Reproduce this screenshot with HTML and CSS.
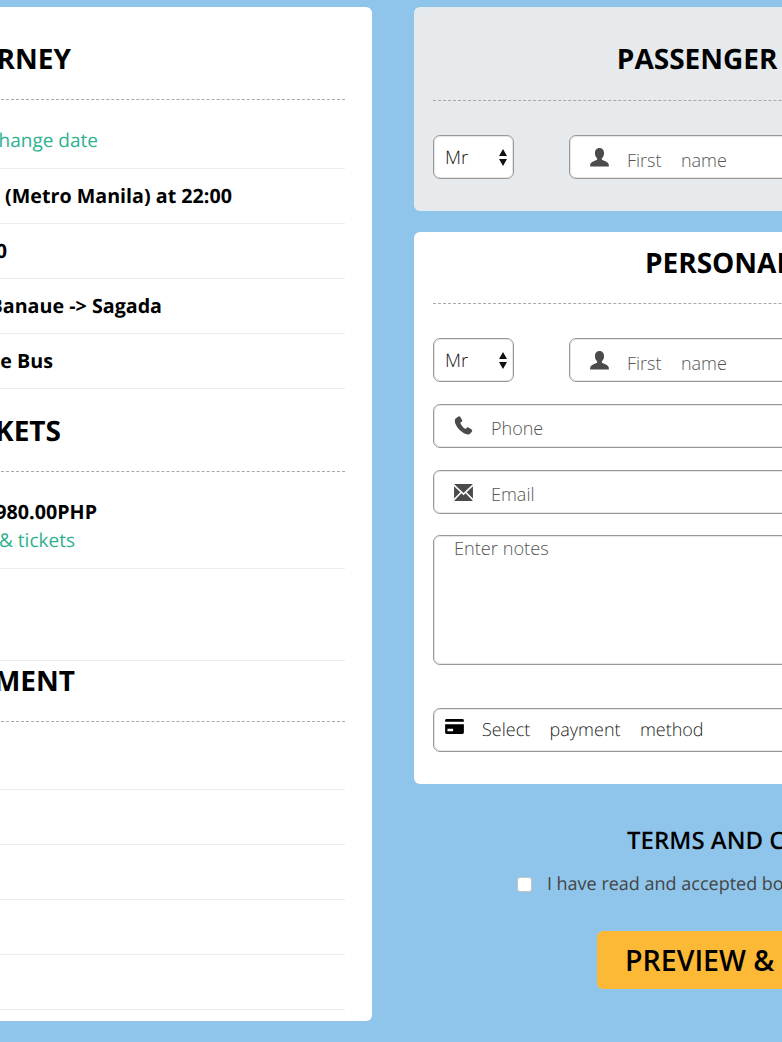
FILE: index.html
```html
<!DOCTYPE html>
<html lang="en">
<head>
<meta charset="utf-8">
<title>Booking</title>
<link rel="stylesheet" href="styles.css">
</head>
<body>
<div class="shell">
  <section class="card summary">
    <h2 class="head end-71">YOUR JOURNEY</h2>
    <div class="row row-first end-98 link">Date: 28 Feb 2020 &nbsp;Change date</div>
    <div class="row end-232">From: Manila (Metro Manila) at 22:00</div>
    <div class="row end-7">To: Sagada at 10:00</div>
    <div class="row end-162">Route: Manila -&gt; Banaue -&gt; Sagada</div>
    <div class="row end-53">Vehicle: Coaster Shuttle Bus</div>
    <h2 class="head head-gap end-61">TICKETS</h2>
    <div class="row row-tall">
      <div class="line end-97">Total: 2 x 980.00PHP</div>
      <div class="line end-75 link">Change seats &amp; tickets</div>
    </div>
    <div class="row row-blank"></div>
    <h2 class="head head-tight end-75">PAYMENT</h2>
    <div class="row row-pay"></div>
    <div class="row"></div>
    <div class="row"></div>
    <div class="row"></div>
    <div class="row"></div>
  </section>

  <main class="side">
    <section class="card form-card grey">
      <h2 class="title title-first">PASSENGER DETAILS</h2>
      <div class="name-row">
        <div class="box select"><span>Mr</span>
          <svg class="updown" viewBox="0 0 8 17"><path d="M4 0l4 7H0zM4 17L0 10h8z"/></svg>
        </div>
        <label class="box field name">
          <svg class="ico person" viewBox="0 0 20 20"><path d="M10 0c3 0 4.800 2.300 4.800 5.400 0 2.100-.9 4.100-2.100 5.200-.5.500-.4 1.500.3 1.900 2 1 5.700 1.900 6.500 4.200.3.800.4 1.700.4 2.900H.1c0-1.200.1-2.100.4-2.900.8-2.300 4.500-3.200 6.500-4.200.7-.4.800-1.400.3-1.900C6.100 9.500 5.200 7.500 5.200 5.400 5.200 2.300 7 0 10 0z"/></svg>
          <input class="input" type="text" placeholder="First  name">
        </label>
        <label class="box field name">
          <input class="input" type="text" placeholder="Last  name">
        </label>
      </div>
    </section>

    <section class="card form-card personal">
      <h2 class="title">PERSONAL DATA</h2>
      <div class="name-row">
        <div class="box select"><span>Mr</span>
          <svg class="updown" viewBox="0 0 8 17"><path d="M4 0l4 7H0zM4 17L0 10h8z"/></svg>
        </div>
        <label class="box field name">
          <svg class="ico person" viewBox="0 0 20 20"><path d="M10 0c3 0 4.800 2.300 4.800 5.400 0 2.100-.9 4.100-2.100 5.200-.5.500-.4 1.500.3 1.900 2 1 5.700 1.900 6.500 4.200.3.800.4 1.700.4 2.900H.1c0-1.200.1-2.100.4-2.900.8-2.300 4.500-3.200 6.500-4.200.7-.4.800-1.400.3-1.900C6.100 9.500 5.200 7.500 5.200 5.400 5.200 2.300 7 0 10 0z"/></svg>
          <input class="input" type="text" placeholder="First  name">
        </label>
        <label class="box field name">
          <input class="input" type="text" placeholder="Last  name">
        </label>
      </div>
      <label class="box field wide gap-22">
        <svg class="ico phone" viewBox="0 0 20 20"><path d="M4.700.4C5.400 0 6.100.2 6.500.9l2 3.400c.4.700.2 1.400-.4 1.800L6.600 7.200c.6 1.500 1.300 2.800 2.300 3.900 1 1.100 2.100 2 3.300 2.700l1.200-1.400c.5-.6 1.300-.7 1.900-.3l3.300 2.200c.7.500.8 1.300.3 1.900-.8 1.200-1.700 2.400-3 3-1.700.7-4.700-.4-7.600-2.700C5 14.200 2.400 10.800 1.300 7.500.6 5.300.8 3.700 1.700 2.600 2.500 1.700 3.600 1 4.700.4z"/></svg>
        <input class="input" type="text" placeholder="Phone">
      </label>
      <label class="box field wide gap-22">
        <svg class="ico mail" viewBox="0 0 20 18"><path d="M0 0h20L10 9.500zM0 2.400v13L6.600 8.700zM20 2.400v13l-6.600-6.700zM7.800 9.900L10 12l2.200-2.100L20 18H0z"/></svg>
        <input class="input" type="text" placeholder="Email">
      </label>
      <textarea class="box notes" placeholder="Enter notes"></textarea>
      <div class="box field wide pay">
        <svg class="ico card-ico" viewBox="0 0 20 16"><path fill-rule="evenodd" d="M1.500 0h17A1.500 1.500 0 0 1 20 1.500V3H0V1.500A1.500 1.500 0 0 1 1.500 0zM0 5.500h20v9a1.500 1.500 0 0 1-1.500 1.500h-17A1.500 1.500 0 0 1 0 14.500zM2.500 10.500v2.500h6v-2.500z"/></svg>
        <span class="pay-text">Select  payment  method</span>
      </div>
    </section>

    <div class="terms">
      <h3 class="terms-title">TERMS AND CONDITIONS</h3>
      <label class="accept"><input class="check" type="checkbox"><span>I have read and accepted both the terms &amp; conditions</span></label>
      <button class="submit" type="button">PREVIEW &amp; CONFIRM</button>
    </div>
  </main>
</div>
</body>
</html>
```
FILE: styles.css
```css
* { box-sizing: border-box; }

html, body {
  margin: 0;
  height: 1042px;
  overflow: hidden;
  background: #8fc4eb;
}

body {
  font-family: "Open Sans", "Liberation Sans", sans-serif;
  color: #000;
  text-rendering: geometricPrecision;
}

.shell {
  display: flex;
  align-items: flex-start;
  gap: 42px;
  width: 1406px;
  margin-left: -300px;
  padding-top: 7px;
}

.card {
  background: #fff;
  border-radius: 6px;
}

.summary {
  flex: 0 0 672px;
  height: 1014px;
  padding: 34px 27px 0 0;
}

.head {
  margin: 0;
  height: 36px;
  padding-bottom: 22px;
  font-size: 28px;
  line-height: 36px;
  font-weight: 700;
  text-align: right;
  border-bottom: 1px dashed #a9a9a9;
  box-sizing: content-box;
  white-space: nowrap;
}

.head-gap { margin-top: 24px; }
.head-tight { margin-top: 2px; }

.row {
  display: flex;
  flex-direction: column;
  justify-content: center;
  height: 55px;
  font-size: 19.7px;
  line-height: 28px;
  font-weight: 700;
  text-align: right;
  border-bottom: 1px solid #ececec;
  white-space: nowrap;
}

.row-first { height: 69px; padding-top: 12px; }
.row-pay { height: 68px; }
.row-tall { height: 97px; padding-top: 11px; }
.row-blank { height: 92px; }

.link { color: #2fb08f; font-weight: 400; font-size: 19px; }

/* visible end of each right-anchored line, measured from the card's inner edge */
.end-71 { padding-right: 274px; }
.end-98 { padding-right: 247px; }
.end-232 { padding-right: 113px; }
.end-7 { padding-right: 338px; }
.end-162 { padding-right: 183px; }
.end-53 { padding-right: 292px; }
.end-61 { padding-right: 284px; }
.end-97 { padding-right: 248px; }
.end-75 { padding-right: 270px; }

.side {
  flex: 0 0 692px;
  min-width: 0;
  display: flex;
  flex-direction: column;
}

.form-card { padding: 0 19px; }

.grey {
  height: 204px;
  padding-top: 34px;
  background: #e6eaed;
}

.personal {
  height: 552px;
  margin-top: 21px;
  padding-top: 13px;
}

.title {
  margin: 0 0 34px;
  padding-bottom: 22px;
  font-size: 28px;
  line-height: 36px;
  font-weight: 700;
  text-align: center;
  border-bottom: 1px dashed #a9a9a9;
  white-space: nowrap;
}

.title-first { padding-bottom: 23px; padding-right: 6px; }

.name-row {
  display: flex;
  gap: 55px;
}

.box {
  height: 44px;
  background: #fff;
  border: 1px solid #989898;
  border-radius: 7px;
  box-shadow: inset 0 0 0 1px #e6e6e6;
}

.select {
  flex: 0 0 81px;
  display: flex;
  align-items: center;
  justify-content: space-between;
  padding: 0 6px 0 11px;
  font-size: 18.5px;
  font-weight: 300;
  color: #111;
}

.updown {
  width: 8px;
  height: 17px;
  fill: #111;
}

.field {
  display: flex;
  align-items: center;
}

.name { flex: 1 1 0; min-width: 0; padding-left: 20px; }
.wide { padding-left: 20px; }
.gap-22 { margin-top: 22px; }

.input {
  flex: 1;
  min-width: 0;
  border: 0;
  outline: 0;
  padding: 3px 0 0;
  background: transparent;
  font: 300 18px "Open Sans", "Liberation Sans", sans-serif;
  color: #222;
}

.name .input { padding-top: 5px; }

.input::placeholder,
.notes::placeholder {
  color: #555;
  opacity: 1;
  white-space: pre;
}

.input::placeholder { word-spacing: 5px; }

.ico { flex: none; fill: #4b4b4b; }

.person { width: 19px; height: 19px; margin: 0 18px 0 0; }
.phone { width: 19px; height: 19px; margin: -1px 18px 0 0; }
.mail { width: 19px; height: 17px; margin: 0 18px 0 0; }

.notes {
  display: block;
  width: 100%;
  height: 130px;
  margin-top: 21px;
  padding: 0 20px;
  resize: none;
  font: 300 18.2px/25px "Open Sans", "Liberation Sans", sans-serif;
}

.pay {
  margin-top: 43px;
  padding-left: 11px;
}

.card-ico {
  width: 19px;
  height: 15px;
  margin: -7px 18px 0 0;
  fill: #000;
}

.pay-text {
  font-size: 18px;
  font-weight: 300;
  color: #222;
  word-spacing: 5px;
  white-space: pre;
}

.terms {
  display: flex;
  flex-direction: column;
  align-items: center;
  padding-top: 41px;
}

.terms-title {
  margin: 0;
  padding-left: 26px;
  font-size: 24px;
  line-height: 32px;
  font-weight: 600;
  white-space: nowrap;
}

.accept {
  display: flex;
  align-items: center;
  gap: 15px;
  margin-top: 11px;
  padding-right: 6px;
  font-size: 18px;
  line-height: 28px;
  color: #444;
  white-space: nowrap;
}

.accept span { margin-top: 2px; }

.check {
  appearance: none;
  width: 15px;
  height: 15px;
  margin: 2px 0 0;
  background: #fff;
  border: 1px solid #c4c4c4;
  border-radius: 3px;
}

.submit {
  width: 326px;
  height: 58px;
  margin-top: 33px;
  padding: 0 0 0 28px;
  border: 0;
  border-radius: 6px;
  background: #fcb935;
  color: #000;
  font: 600 28.5px "Open Sans", "Liberation Sans", sans-serif;
  text-align: left;
  white-space: nowrap;
}
```
